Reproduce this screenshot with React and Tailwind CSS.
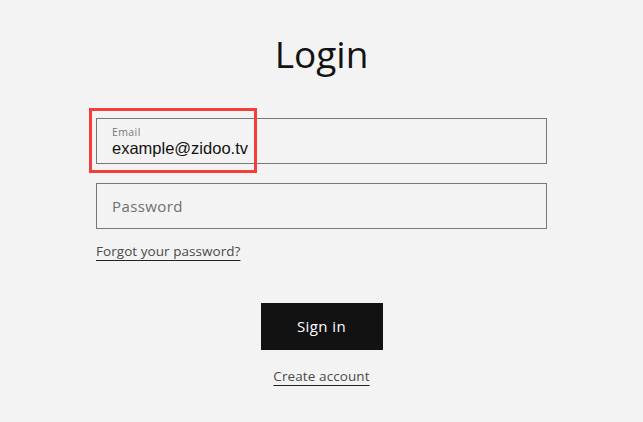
export default function App() {
  return (
    <div className="min-h-[422px] w-full bg-[#f3f3f3]" style={{ fontFamily: '"Open Sans", sans-serif' }}>
      <div className="mx-auto flex w-[451px] flex-col pt-[29px]">
        <h1 className="text-center text-[37px] leading-[50px] tracking-[0px] text-[#121212]">Login</h1>
        <div className="relative mt-[39px] h-[46px] border border-[#777] px-[15px]">
          <div className="pt-[6px] text-[10.5px] leading-[14px] tracking-[0.4px] text-[#777]">Email</div>
          <div className="text-[16.5px] leading-[19px] text-[#121212]" style={{ fontFamily: '"Liberation Sans", Arial, sans-serif' }}>
            example@zidoo.tv
          </div>
          <div className="pointer-events-none absolute left-[-8px] top-[-11px] h-[65px] w-[168px] border-[3px] border-[#f43d3d]" />
        </div>
        <div className="mt-[19px] flex h-[46px] items-center border border-[#777] px-[15px]">
          <span className="text-[15px] tracking-[0.4px] text-[#6f6f6f]">Password</span>
        </div>
        <div className="mt-[13px] flex">
          <a className="text-[13.5px] leading-[18px] tracking-[0.05px] text-[#4a4a4a] underline decoration-[#222] underline-offset-[4px]">
            Forgot your password?
          </a>
        </div>
        <div className="mt-[43px] flex justify-center">
          <button className="flex h-[47px] w-[122px] items-center justify-center bg-[#121212] text-[15px] tracking-[0.4px] text-white">
            Sign in
          </button>
        </div>
        <div className="mt-[17px] flex justify-center">
          <a className="text-[13.5px] leading-[18px] tracking-[0.1px] text-[#4a4a4a] underline decoration-[#222] underline-offset-[4px]">
            Create account
          </a>
        </div>
      </div>
    </div>
  );
}
